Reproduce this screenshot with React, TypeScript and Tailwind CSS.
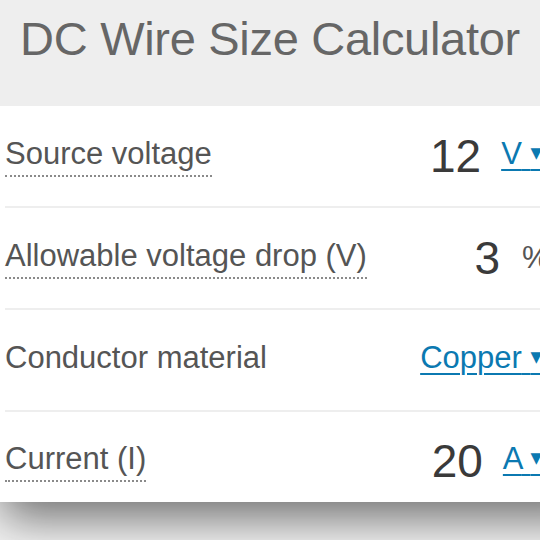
import React from "react";

const font = { fontFamily: '"Liberation Sans", Arial, Helvetica, sans-serif' };

function Unit({ text }: { text: string }) {
  return (
    <span className="text-[31px] leading-[36px] text-[#0b79b1] underline decoration-[2px] underline-offset-[5px] whitespace-pre">
      {text}{" "}
      <span className="text-[15px] relative top-[-6px]" style={{ fontFamily: '"DejaVu Sans", sans-serif' }}>▼</span>
    </span>
  );
}

function Label({ text, dotted = true }: { text: string; dotted?: boolean }) {
  return (
    <span
      className={
        "inline-block text-[31px] leading-[36px] text-[#555] pb-[3px] " +
        (dotted ? "border-b-2 border-dotted border-[#8a8a8a]" : "border-b-2 border-transparent")
      }
    >
      {text}
    </span>
  );
}

export default function App() {
  return (
    <div className="w-[540px] h-[540px] overflow-hidden bg-[#f3f3f3]" style={font}>
      <div className="relative z-10 w-[540px] bg-[#eeeeee] h-[106px] flex justify-center pt-[11px]">
        <h1 className="text-[47px] leading-[56px] text-[#666] whitespace-nowrap tracking-[-0.3px]">DC Wire Size Calculator</h1>
      </div>
      <div className="w-[600px] bg-white shadow-[0_22px_44px_-6px_rgba(0,0,0,0.55)] ml-[-4px] pl-[9px]">
        <div className="h-[102px] border-b-2 border-[#eeeeee] flex items-center pr-[54px]">
          <div className="flex-1"><Label text="Source voltage" /></div>
          <span className="text-[46px] leading-[52px] text-[#3a3a3a] mr-[20px]">12</span>
          <Unit text="V" />
        </div>
        <div className="h-[102px] border-b-2 border-[#eeeeee] flex items-center pr-[54px]">
          <div className="flex-1"><Label text="Allowable voltage drop (V)" /></div>
          <span className="text-[46px] leading-[52px] text-[#3a3a3a] mr-[22px]">3</span>
          <span className="text-[31px] leading-[36px] text-[#555] w-[20px] whitespace-nowrap">%</span>
        </div>
        <div className="h-[102px] border-b-2 border-[#eeeeee] flex items-center pr-[54px]">
          <div className="flex-1"><Label text="Conductor material" dotted={false} /></div>
          <Unit text="Copper" />
        </div>
        <div className="h-[90px] flex items-center pr-[54px] pt-[8px]">
          <div className="flex-1"><Label text="Current (I)" /></div>
          <span className="text-[46px] leading-[52px] text-[#3a3a3a] mr-[20px]">20</span>
          <Unit text="A" />
        </div>
      </div>
    </div>
  );
}
